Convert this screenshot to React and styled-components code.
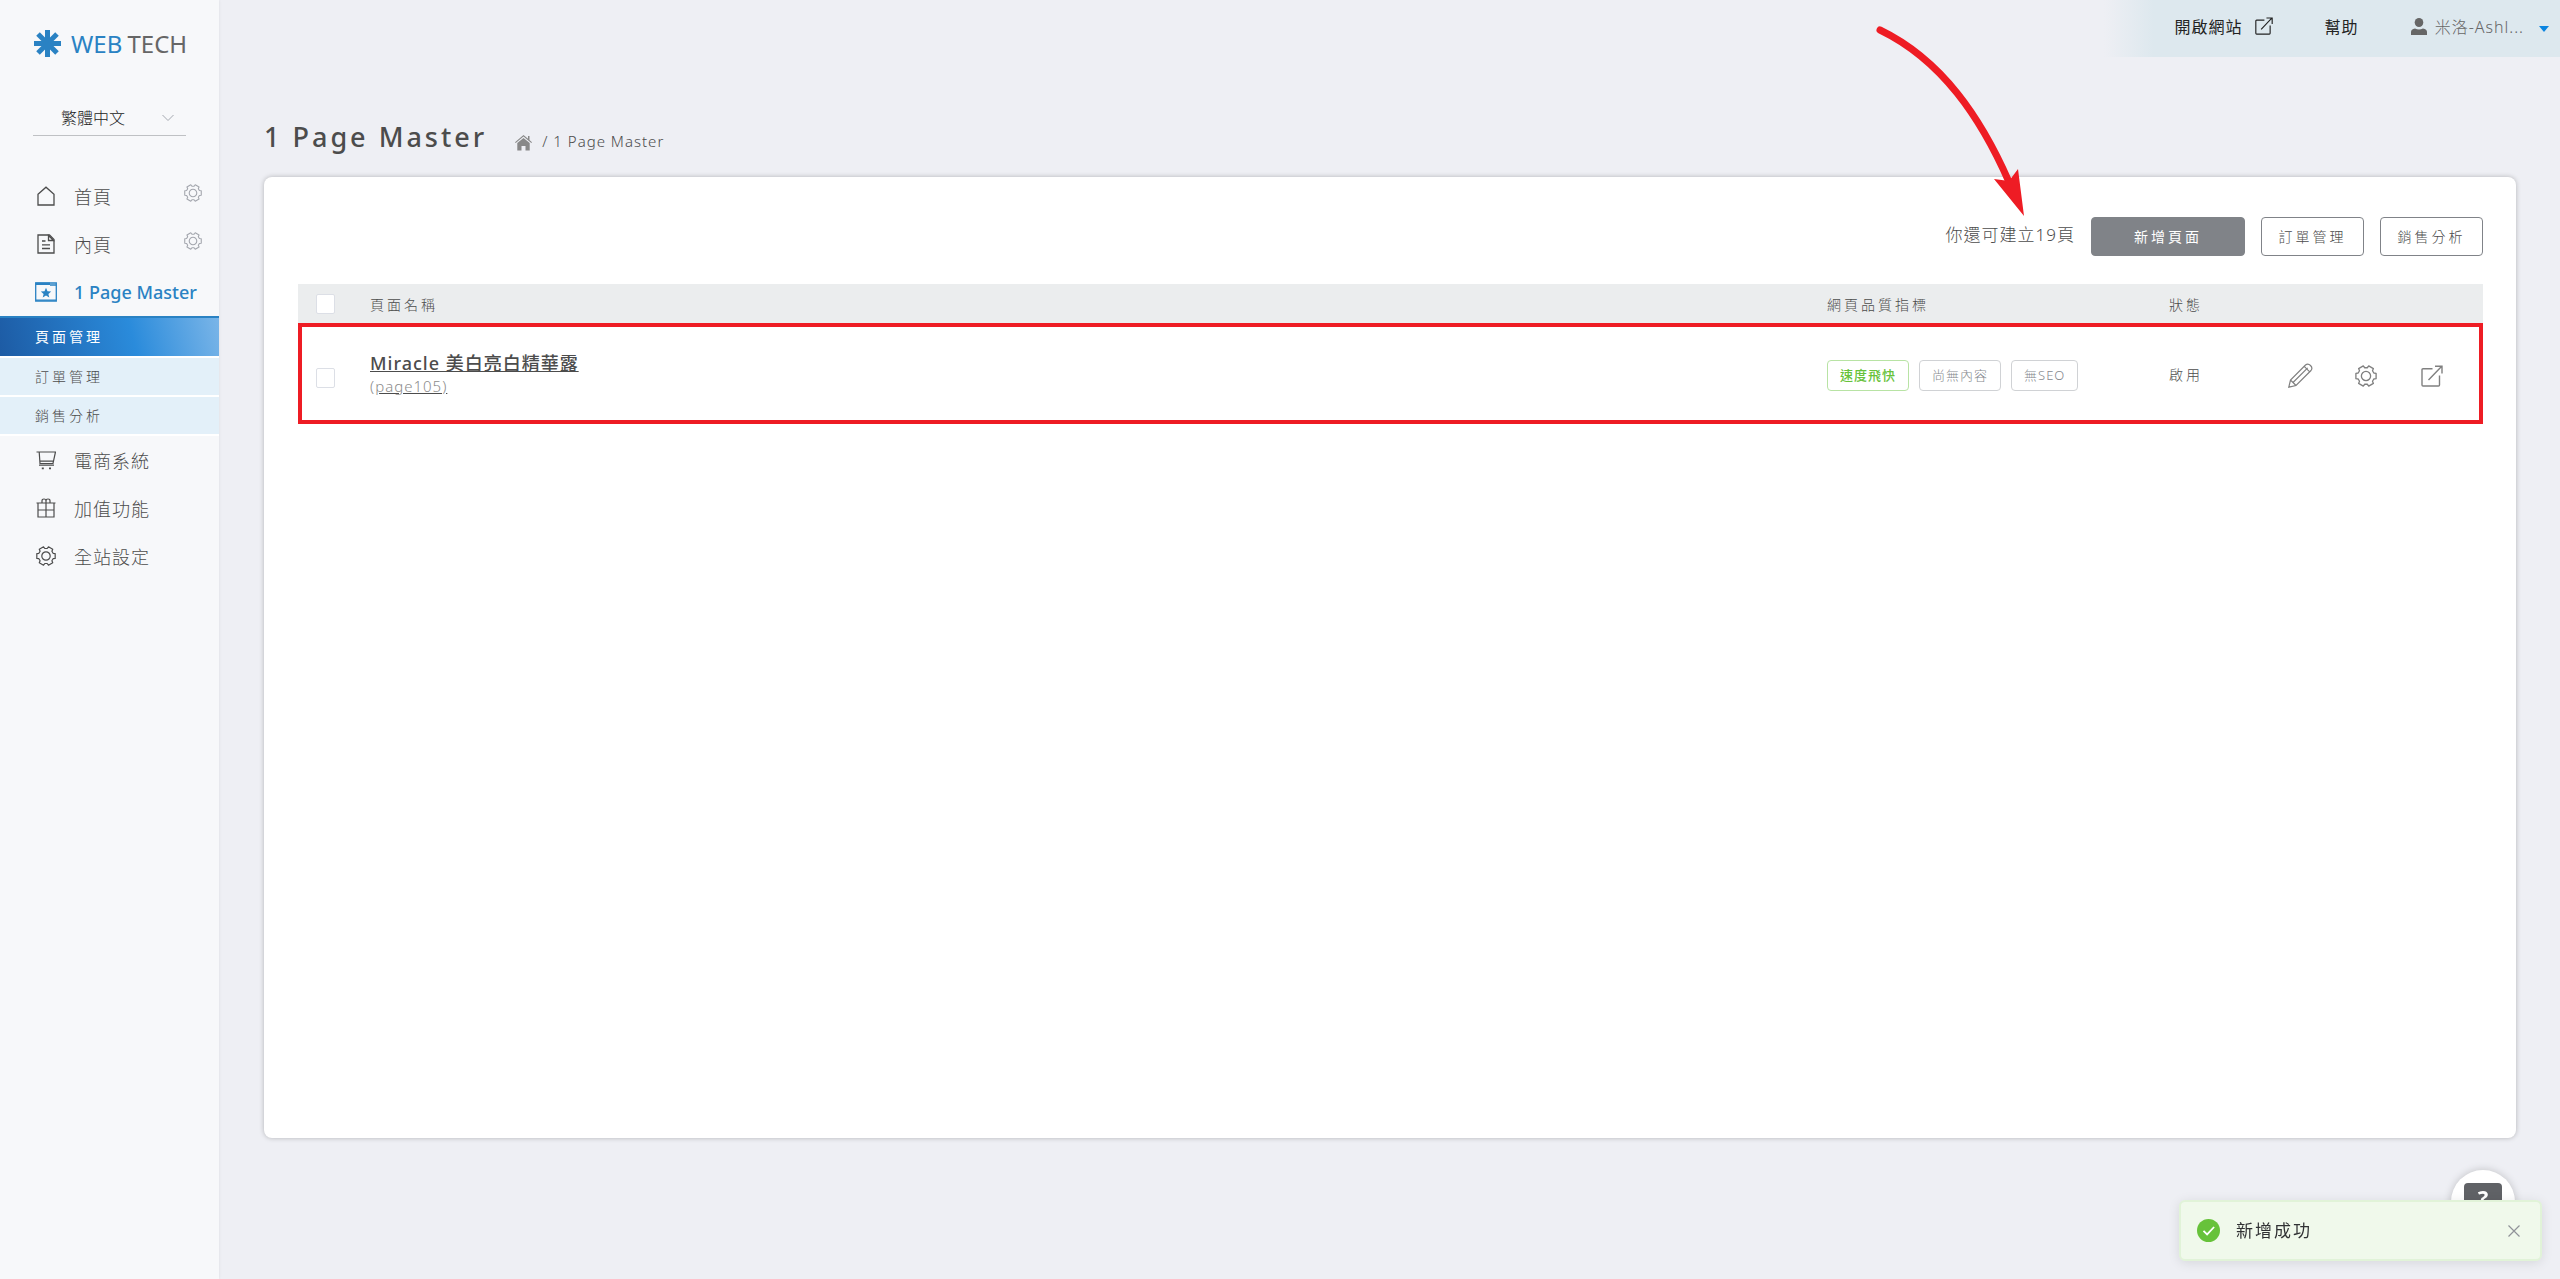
import React from 'react'
import styled, { createGlobalStyle } from 'styled-components'

const GlobalStyle = createGlobalStyle`
  :root {
    --mainBlue: #2a82c3;
    --mainText: #4c4c4c;
    --mainGrey: #808388;
    --lineGrey: #d0d2d5;
  }
  * {
    box-sizing: border-box;
  }
  body {
    margin: 0;
    background: #eeeff4;
    color: var(--mainText);
    font-family: "Noto Sans", "Noto Sans CJK TC", sans-serif;
    font-size: 14px;
    font-weight: 300;
  }
  button, select, input {
    font: inherit;
    color: inherit;
    margin: 0;
  }
  button {
    padding: 0;
    border: 0;
    background: none;
    cursor: pointer;
  }
  a {
    color: inherit;
    text-decoration: none;
  }
`

const Icon = ({ size = 20, stroke = 1, viewBox = '0 0 20 20', children }) => (
  <svg width={size} height={size} viewBox={viewBox} fill="none" stroke="currentColor" strokeWidth={stroke} aria-hidden="true">
    {children}
  </svg>
)

const HomeIcon = () => (
  <Icon stroke={1.3}>
    <path d="M2 8.2 10 1.2l8 7V19H2z" />
  </Icon>
)

const PageIcon = () => (
  <Icon stroke={1.3}>
    <path d="M2 1h11.5L18 5.5V19H2z" />
    <path d="M12.5 1.5V6.5H17.5zM6 7h3.5M6 10.8h8M6 14.5h8" />
  </Icon>
)

const MasterIcon = () => (
  <Icon size={22} viewBox="0 0 22 20" stroke={1.3}>
    <path d="M.7 1h20.6v18H.7z" />
    <path d="M.5.5h14.5v2.5H.5z" fill="currentColor" stroke="none" />
    <path d="M15 3h6M1 18.2h20" />
    <path d="m11 5.800 1.500 3.400 3.700.3-2.800 2.400.9 3.600L11 13.600l-3.300 1.900.9-3.600-2.800-2.400 3.700-.3z" fill="currentColor" stroke="none" />
  </Icon>
)

const CartIcon = () => (
  <Icon stroke={1.2}>
    <path d="M.5 2h19l-2.500 11.500H4L3.200 2M3.800 11.200h13.700M3 15.200h15" />
    <path d="M5.800 18.400h2M13 18.400h2" strokeWidth="1.8" />
  </Icon>
)

const GiftIcon = () => (
  <Icon stroke={1.2}>
    <path d="M.5 5h19M2 5v14h16V5M2 12h16M10 5v14M6 5V2.800Q6 1 8 1q2 0 2 2v2V3q0-2 2-2 2 0 2 1.800V5" />
  </Icon>
)

// six teeth, one every 60 degrees
const gearPath = [0, 60, 120, 180, 240, 300]
  .flatMap(deg => [[-21, 7.6], [-15, 9.5], [15, 9.5], [21, 7.6]].map(([turn, r]) => {
    const angle = ((deg + turn) * Math.PI) / 180
    return (10 + r * Math.cos(angle)).toFixed(2) + ' ' + (10 + r * Math.sin(angle)).toFixed(2)
  }))
  .join('L')

const GearIcon = ({ size = 20, stroke = 1.2 }) => (
  <Icon size={size} stroke={stroke}>
    <path d={'M' + gearPath + 'z'} strokeLinejoin="round" />
    <circle cx="10" cy="10" r="4.2" />
  </Icon>
)

const OpenIcon = ({ size = 22, stroke = 1.4 }) => (
  <Icon size={size} stroke={stroke} viewBox="0 0 22 22">
    <path d="M11.5 3.8H2Q1 3.800 1 4.800V20q0 1 1 1h15.500q1 0 1-1V10.500M7.500 15 20.500 1.500M14 1.200h7V8.500" />
  </Icon>
)

const PencilIcon = () => (
  <Icon size={25} viewBox="0 0 25 25" stroke={1.2}>
    <path d="M.8 24.200 2.500 17 17.500 2q2.500-2 5 .5t.5 5L8 22.500zM2.500 17l5.500 5.500M5 19.500 19.700 4.800M16.200 3.300l5.500 5.500" />
  </Icon>
)

const LogoMark = () => (
  <Icon size={27} viewBox="0 0 27 27" stroke={5}>
    <path d="M13.500 0v27M0 13.500h27M4 4l19 19M23 4 4 23" />
  </Icon>
)

const HouseIcon = () => (
  <svg width="17" height="16" viewBox="0 0 17 16" fill="currentColor" aria-hidden="true">
    <path d="M8.500 0 0 7.200l.7.800L8.500 1.600 16.300 8l.7-.8-2.500-2.200V1h-1.500v2.800z" />
    <path d="M8.500 3 2.300 8v7.500h4.200V11h4v4.500h4.200V8z" />
  </svg>
)

const UserIcon = () => (
  <svg width="16" height="17" viewBox="0 0 16 17" fill="currentColor" aria-hidden="true">
    <ellipse cx="8" cy="4.500" rx="4.300" ry="4.500" />
    <path d="M0 17v-3q0-3 4-3.500 4 2 8 0 4 .5 4 3.500v3z" />
  </svg>
)

const submenu = ['頁面管理', '訂單管理', '銷售分析']

const menu = [
  { label: '首頁', icon: <HomeIcon />, gear: true },
  { label: '內頁', icon: <PageIcon />, gear: true },
  { label: '1 Page Master', icon: <MasterIcon />, active: true, items: submenu },
  { label: '電商系統', icon: <CartIcon /> },
  { label: '加值功能', icon: <GiftIcon /> },
  { label: '全站設定', icon: <GearIcon /> }
]

function Sidebar() {
  return (
    <SideWrapper>
      <Logo href="#">
        <LogoMark />
        <span>WEB <em>TECH</em></span>
      </Logo>
      <LangField>
        <select aria-label="語言" defaultValue="tc">
          <option value="tc">繁體中文</option>
        </select>
        <Icon size={12} viewBox="0 0 12 12">
          <path d="m.5 3 5.500 5.500L11.500 3" />
        </Icon>
      </LangField>
      <nav>
        {menu.map(item => (
          <React.Fragment key={item.label}>
            <MenuRow>
              <MenuLink href="#" $active={item.active}>
                <i>{item.icon}</i>
                {item.label}
              </MenuLink>
              {item.gear && (
                <GearButton aria-label={item.label + '設定'}>
                  <GearIcon size={18} />
                </GearButton>
              )}
            </MenuRow>
            {item.items && (
              <SubMenu>
                {item.items.map((name, i) => (
                  <SubLink key={name} href="#" $active={i === 0}>{name}</SubLink>
                ))}
              </SubMenu>
            )}
          </React.Fragment>
        ))}
      </nav>
    </SideWrapper>
  )
}

function Topbar() {
  return (
    <TopWrapper>
      <TopLink href="#">
        開啟網站
        <OpenIcon size={18} />
      </TopLink>
      <TopLink href="#">幫助</TopLink>
      <UserButton>
        <UserIcon />
        <span>米洛-Ashl...</span>
        <Caret />
      </UserButton>
    </TopWrapper>
  )
}

function PageTable() {
  return (
    <Table>
      <colgroup>
        <col width="72" />
        <col />
        <col width="342" />
        <col width="98" />
        <col width="216" />
      </colgroup>
      <thead>
        <tr>
          <th><CheckBox aria-label="全選" /></th>
          <th>頁面名稱</th>
          <th>網頁品質指標</th>
          <th>狀態</th>
          <th />
        </tr>
      </thead>
      <tbody>
        <HighlightRow>
          <td><CheckBox aria-label="Miracle 美白亮白精華露" /></td>
          <td>
            <PageName href="#">
              <strong>Miracle 美白亮白精華露</strong>
              <small>(page105)</small>
            </PageName>
          </td>
          <td>
            <TagList>
              <Tag $good>速度飛快</Tag>
              <Tag>尚無內容</Tag>
              <Tag>無SEO</Tag>
            </TagList>
          </td>
          <td>啟用</td>
          <td>
            <Actions>
              <button aria-label="編輯"><PencilIcon /></button>
              <button aria-label="設定"><GearIcon size={22} /></button>
              <button aria-label="開啟"><OpenIcon /></button>
            </Actions>
          </td>
        </HighlightRow>
      </tbody>
    </Table>
  )
}

function Toast() {
  return (
    <ToastWrapper role="status">
      <svg width="23" height="23" viewBox="0 0 23 23" aria-hidden="true">
        <circle cx="11.500" cy="11.500" r="11.500" fill="#67c23a" />
        <path d="m6.500 11.800 3.600 3.600 7-7.400" fill="none" stroke="#fff" strokeWidth="1.8" />
      </svg>
      <span>新增成功</span>
      <button aria-label="關閉">
        <Icon size={12} viewBox="0 0 12 12" stroke={1.2}>
          <path d="m.5.5 11 11m0-11-11 11" />
        </Icon>
      </button>
    </ToastWrapper>
  )
}

export default function App() {
  return (
    <Layout>
      <GlobalStyle />
      <Sidebar />
      <Content>
        <Topbar />
        <Main>
          <Heading>
            <h1>1 Page Master</h1>
            <Breadcrumb>
              <a href="#" aria-label="首頁"><HouseIcon /></a>
              <span>/ 1 Page Master</span>
            </Breadcrumb>
          </Heading>
          <Card>
            <Toolbar>
              <p>你還可建立19頁</p>
              <ActionButton $primary>新增頁面</ActionButton>
              <ActionButton>訂單管理</ActionButton>
              <ActionButton>銷售分析</ActionButton>
            </Toolbar>
            <PageTable />
          </Card>
        </Main>
      </Content>
      <Arrow width="160" height="200" viewBox="1870 20 160 200" aria-hidden="true">
        <path d="M1880 30C1942 60 1981 118 2009 182" fill="none" stroke="#ee1c24" strokeWidth="7" strokeLinecap="round" />
        <path d="m2024 216-30-37 15 2 9-12z" fill="#ee1c24" />
      </Arrow>
      <HelpButton aria-label="說明"><span>?</span></HelpButton>
      <Toast />
    </Layout>
  )
}

const Layout = styled.div`
  display: flex;
  min-height: 100vh;
`

const SideWrapper = styled.aside`
  flex: 0 0 219px;
  background: #f7f8fa;
  box-shadow: 0 0 3px rgba(0, 0, 0, 0.08);
`

const Logo = styled.a`
  display: flex;
  align-items: center;
  gap: 10px;
  height: 86px;
  padding-left: 34px;
  color: var(--mainBlue);
  font-size: 24px;
  font-weight: 400;
  em {
    margin-left: -1px;
    color: #666;
    font-style: normal;
  }
`

const LangField = styled.div`
  display: grid;
  align-items: center;
  margin: 14px 33px 36px;
  border-bottom: 1px solid #bfc1c4;
  select, svg {
    grid-area: 1 / 1;
  }
  select {
    height: 35px;
    padding: 0 28px;
    border: 0;
    background: none;
    appearance: none;
    color: #222;
    font-size: 16px;
  }
  svg {
    justify-self: end;
    margin-right: 12px;
    color: #a4a8b0;
    pointer-events: none;
  }
`

const MenuRow = styled.div`
  display: flex;
  height: 48px;
`

const MenuLink = styled.a`
  display: flex;
  flex: 1;
  align-items: center;
  gap: 17px;
  padding-left: 35px;
  color: ${props => (props.$active ? 'var(--mainBlue)' : 'var(--mainText)')};
  font-size: 18px;
  font-weight: ${props => (props.$active ? 500 : 300)};
  letter-spacing: ${props => (props.$active ? '0' : '1px')};
  white-space: nowrap;
  i {
    display: flex;
    flex: 0 0 22px;
    justify-content: center;
  }
`

const GearButton = styled.button`
  display: flex;
  padding: 12px 17px 0 0;
  color: #a3a6ad;
`

const SubMenu = styled.div`
  border-top: 2px solid var(--mainBlue);
`

const SubLink = styled.a`
  display: flex;
  align-items: center;
  height: ${props => (props.$active ? 40 : 39)}px;
  padding: 0 0 2px 35px;
  border-bottom: 2px solid #fff;
  background: ${props => (props.$active
    ? 'linear-gradient(75deg, #1d5ba4 0%, #2a8bdb 60%, #7ab5e8 100%)'
    : '#e3f0f9')};
  color: ${props => (props.$active ? '#fff' : 'var(--mainText)')};
  font-weight: ${props => (props.$active ? 400 : 300)};
  letter-spacing: 3px;
`

const Content = styled.div`
  display: flex;
  flex: 1;
  flex-direction: column;
  min-width: 0;
`

const TopWrapper = styled.header`
  display: flex;
  align-items: center;
  align-self: flex-end;
  gap: 52px;
  height: 57px;
  padding: 0 11px 5px 71px;
  background: linear-gradient(90deg, #eeeff4 0, #dde8ee 50px);
`

const TopLink = styled.a`
  display: flex;
  align-items: center;
  gap: 12px;
  color: #222;
  font-size: 16px;
  font-weight: 400;
  letter-spacing: 1px;
`

const UserButton = styled.button`
  display: flex;
  align-items: center;
  gap: 8px;
  color: #666;
  font-size: 16px;
  letter-spacing: 1px;
`

const Caret = styled.span`
  margin: 6px 0 0 7px;
  border: 5px solid transparent;
  border-top: 6px solid #0a84e0;
  border-bottom: 0;
`

const Main = styled.main`
  display: flex;
  flex: 1;
  flex-direction: column;
  padding: 56px 44px 141px 45px;
`

const Heading = styled.div`
  display: flex;
  align-items: center;
  gap: 28px;
  height: 48px;
  margin-bottom: 16px;
  h1 {
    margin: 0 0 2px;
    font-size: 27px;
    font-weight: 500;
    letter-spacing: 3px;
  }
`

const Breadcrumb = styled.nav`
  display: flex;
  align-items: center;
  gap: 10px;
  margin-top: 8px;
  font-size: 15px;
  letter-spacing: 1px;
  a {
    padding-top: 3px;
    color: #888;
    line-height: 0;
  }
`

const Card = styled.section`
  flex: 1;
  padding: 40px 33px 40px 34px;
  border-radius: 8px;
  background: #fff;
  box-shadow: 0 0 5px rgba(0, 0, 0, 0.25);
`

const Toolbar = styled.div`
  display: flex;
  align-items: center;
  justify-content: flex-end;
  gap: 16px;
  margin-bottom: 28px;
  p {
    margin: 0 0 6px;
    font-size: 17px;
    letter-spacing: 1px;
  }
`

const ActionButton = styled.button`
  width: ${props => (props.$primary ? 154 : 103)}px;
  height: 39px;
  padding-bottom: 2px;
  border: 1px solid var(--mainGrey);
  border-radius: 4px;
  background: ${props => (props.$primary ? 'var(--mainGrey)' : '#fff')};
  color: ${props => (props.$primary ? '#fff' : 'var(--mainText)')};
  font-weight: ${props => (props.$primary ? 400 : 300)};
  letter-spacing: 3px;
`

const Table = styled.table`
  width: 100%;
  border-collapse: collapse;
  table-layout: fixed;
  th, td {
    padding: 0;
    text-align: left;
    font-weight: 300;
    letter-spacing: 3px;
  }
  th {
    height: 39px;
    background: #ebedee;
  }
  td {
    height: 101px;
  }
`

const HighlightRow = styled.tr`
  outline: 4px solid #ee1c24;
  outline-offset: -4px;
  td:first-child {
    padding-top: 8px;
  }
`

const CheckBox = styled.input.attrs({ type: 'checkbox' })`
  display: block;
  width: 19px;
  height: 20px;
  margin-left: 18px;
  border: 1px solid #dcdfe6;
  border-radius: 2px;
  background: #fff;
  appearance: none;
`

const PageName = styled.a`
  display: flex;
  flex-direction: column;
  align-items: flex-start;
  letter-spacing: 1px;
  text-decoration: underline;
  strong {
    font-size: 18px;
    font-weight: 500;
    line-height: 24px;
  }
  small {
    color: #8c8c8c;
    font-size: 15px;
    line-height: 22px;
  }
`

const TagList = styled.div`
  display: flex;
  gap: 10px;
  padding-top: 4px;
`

const Tag = styled.span`
  padding: 0 12px;
  border: 1px solid ${props => (props.$good ? '#b8e3a4' : 'var(--lineGrey)')};
  border-radius: 4px;
  color: ${props => (props.$good ? '#67c23a' : '#85888e')};
  font-size: 13px;
  font-weight: ${props => (props.$good ? 500 : 300)};
  line-height: 29px;
  letter-spacing: 1px;
`

const Actions = styled.div`
  display: flex;
  align-items: center;
  padding-top: 4px;
  button {
    display: flex;
    justify-content: center;
    width: 66px;
    color: #808080;
  }
`

const Arrow = styled.svg`
  position: absolute;
  top: 20px;
  right: 530px;
`

const HelpButton = styled.button`
  position: fixed;
  right: 45px;
  bottom: 45px;
  display: flex;
  justify-content: center;
  width: 64px;
  height: 64px;
  padding-top: 13px;
  border-radius: 50%;
  background: #fff;
  box-shadow: 0 0 8px rgba(0, 0, 0, 0.2);
  span {
    width: 38px;
    height: 30px;
    border-radius: 4px;
    background: #606266;
    color: #fff;
    font-size: 22px;
    font-weight: 700;
    line-height: 28px;
  }
`

const ToastWrapper = styled.div`
  position: fixed;
  right: 18px;
  bottom: 18px;
  display: flex;
  align-items: center;
  width: 363px;
  height: 61px;
  padding: 0 20px 0 16px;
  border: 2px solid #e1f3d8;
  border-radius: 6px;
  background: #f0f9eb;
  box-shadow: 0 2px 12px rgba(0, 0, 0, 0.1);
  span {
    flex: 1;
    margin: 0 0 2px 16px;
    color: #303133;
    font-size: 17px;
    font-weight: 400;
    letter-spacing: 2px;
  }
  button {
    display: flex;
    color: #909399;
  }
`
